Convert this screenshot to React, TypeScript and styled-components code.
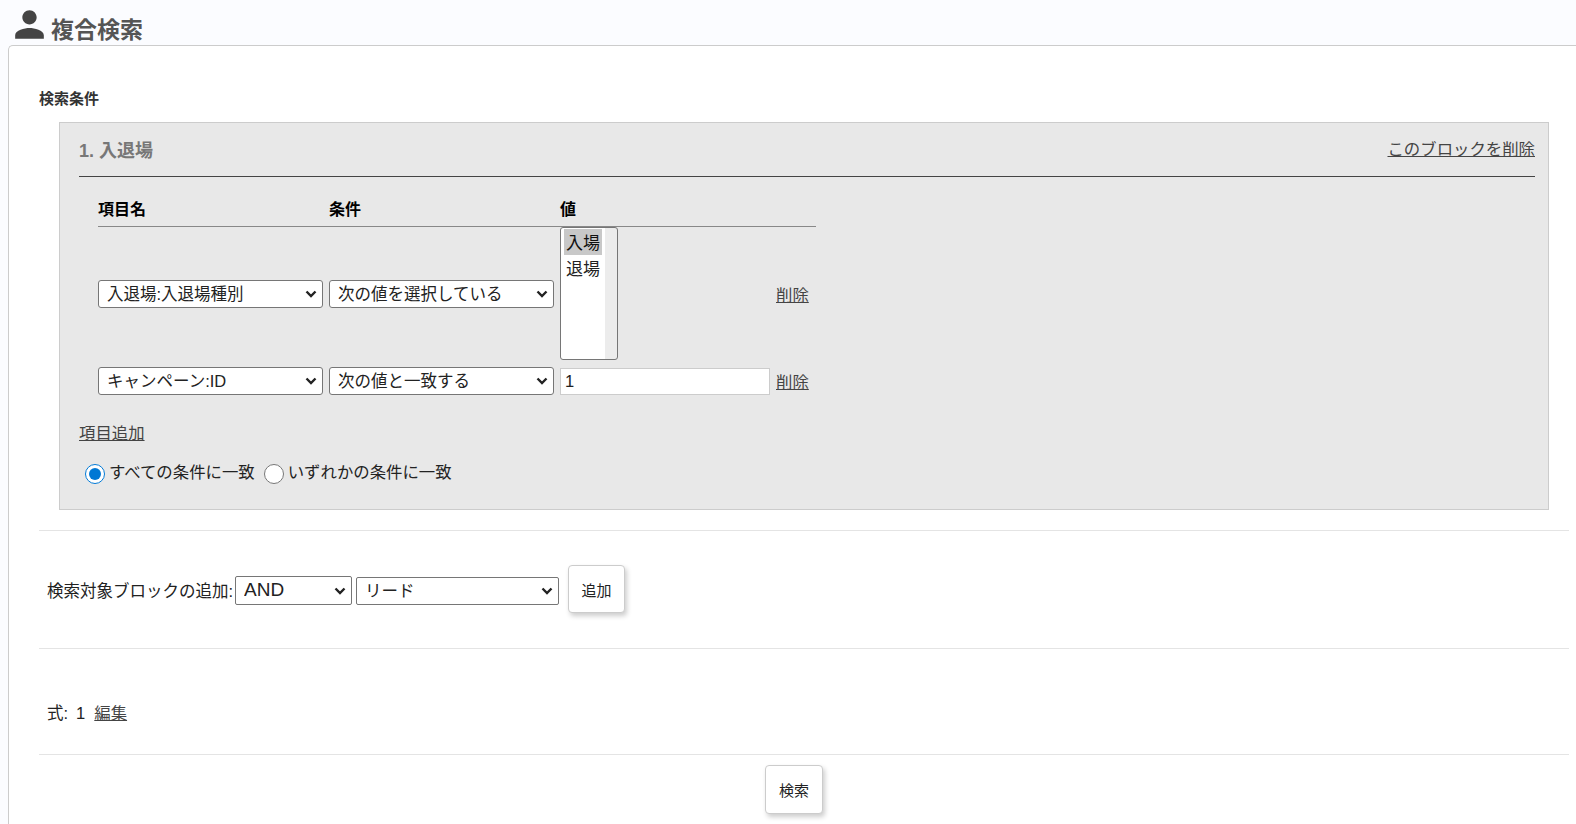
import React from "react";
import styled, { createGlobalStyle } from "styled-components";

const GlobalStyle = createGlobalStyle`
  html, body {
    margin: 0;
    padding: 0;
    background: #fbfcff;
    overflow: hidden;
  }
  body {
    font-family: "Liberation Sans", "Noto Sans CJK JP", sans-serif;
    font-size: 16.4px;
    color: #333;
  }
  select, input, button {
    font-family: "Liberation Sans", "Noto Sans CJK JP", sans-serif;
  }
`;

const chevron =
  "data:image/svg+xml,%3Csvg xmlns='http://www.w3.org/2000/svg' width='12' height='8' viewBox='0 0 12 8'%3E%3Cpath d='M1.5 1.5l4.5 4.5 4.5-4.5' fill='none' stroke='%23222' stroke-width='2.4'/%3E%3C/svg%3E";

export default function App() {
  return (
    <Page>
      <GlobalStyle />
      <Header>
        <PersonIcon viewBox="0 0 24 24">
          <path d="M12 12c2.21 0 4-1.79 4-4s-1.79-4-4-4-4 1.79-4 4 1.79 4 4 4zm0 2c-2.67 0-8 1.34-8 4v2h16v-2c0-2.66-5.33-4-8-4z" />
        </PersonIcon>
        <PageTitle>複合検索</PageTitle>
      </Header>

      <Card>
        <SectionLabel>検索条件</SectionLabel>

        <Block>
          <BlockHead>
            <BlockTitle>1. 入退場</BlockTitle>
            <TextLink href="#">このブロックを削除</TextLink>
          </BlockHead>

          <ConditionTable>
            <thead>
              <tr>
                <HeadCell>項目名</HeadCell>
                <HeadCell>条件</HeadCell>
                <HeadCell>値</HeadCell>
                <HeadCell />
              </tr>
            </thead>
            <tbody>
              <tr>
                <Cell>
                  <FieldSelect defaultValue="a">
                    <option value="a">入退場:入退場種別</option>
                  </FieldSelect>
                </Cell>
                <Cell>
                  <FieldSelect defaultValue="a">
                    <option value="a">次の値を選択している</option>
                  </FieldSelect>
                </Cell>
                <Cell>
                  <ValueList multiple size={5} defaultValue={["in"]}>
                    <option value="in">入場</option>
                    <option value="out">退場</option>
                  </ValueList>
                </Cell>
                <Cell>
                  <TextLink href="#">削除</TextLink>
                </Cell>
              </tr>
              <tr>
                <SpacedCell>
                  <FieldSelect defaultValue="a">
                    <option value="a">キャンペーン:ID</option>
                  </FieldSelect>
                </SpacedCell>
                <SpacedCell>
                  <FieldSelect defaultValue="a">
                    <option value="a">次の値と一致する</option>
                  </FieldSelect>
                </SpacedCell>
                <SpacedCell>
                  <ValueInput defaultValue="1" />
                </SpacedCell>
                <SpacedCell>
                  <TextLink href="#">削除</TextLink>
                </SpacedCell>
              </tr>
            </tbody>
          </ConditionTable>

          <AddItemRow>
            <TextLink href="#">項目追加</TextLink>
          </AddItemRow>

          <RadioRow>
            <RadioLabel>
              <Radio type="radio" name="match" defaultChecked />
              すべての条件に一致
            </RadioLabel>
            <RadioLabel>
              <Radio type="radio" name="match" />
              いずれかの条件に一致
            </RadioLabel>
          </RadioRow>
        </Block>

        <Divider />

        <AddBlockRow>
          <span>検索対象ブロックの追加:</span>
          <OperatorSelect defaultValue="and">
            <option value="and">AND</option>
          </OperatorSelect>
          <TargetSelect defaultValue="lead">
            <option value="lead">リード</option>
          </TargetSelect>
          <AddButton>追加</AddButton>
        </AddBlockRow>

        <Divider />

        <FormulaRow>
          <span>式:</span>
          <span>1</span>
          <TextLink href="#">編集</TextLink>
        </FormulaRow>

        <Divider />

        <SubmitRow>
          <ActionButton>検索</ActionButton>
        </SubmitRow>
      </Card>
    </Page>
  );
}

const Page = styled.div`
  width: 1576px;
  height: 824px;
  overflow: hidden;
`;
const Header = styled.header`
  height: 45px;
  display: flex;
  align-items: flex-start;
  padding-left: 8px;
  box-sizing: border-box;
`;
const PersonIcon = styled.svg`
  width: 43px;
  height: 43px;
  margin-top: 3px;
  fill: #444;
  flex: none;
`;
const PageTitle = styled.h1`
  margin: 13px 0 0;
  font-size: 23px;
  line-height: 34px;
  height: 32px;
  font-weight: 700;
  color: #555;
`;
const Card = styled.main`
  margin-left: 8px;
  height: 779px;
  box-sizing: border-box;
  background: #fff;
  border: 1px solid #ccc;
  border-right: none;
  border-bottom: none;
  border-top-left-radius: 5px;
  padding: 35px 7px 0 30px;
`;
const SectionLabel = styled.div`
  font-size: 15px;
  line-height: 36px;
  font-weight: 700;
  color: #333;
`;
const Block = styled.section`
  margin: 5px 20px 20px 20px;
  height: 388px;
  box-sizing: border-box;
  background: #e8e8e8;
  border: 1px solid #ccc;
  padding: 0 13px 0 19px;
`;
const BlockHead = styled.div`
  height: 54px;
  padding-bottom: 2px;
  box-sizing: border-box;
  display: flex;
  justify-content: space-between;
  align-items: center;
  border-bottom: 1px solid #444;
  a { margin-bottom: 2px; }
`;
const BlockTitle = styled.div`
  font-size: 18px;
  font-weight: 700;
  color: #777;
`;
const TextLink = styled.a`
  font-size: 16.4px;
  color: #444;
  text-decoration: underline;
`;
const ConditionTable = styled.table`
  margin: 15px 0 0 19px;
  width: 718px;
  border-collapse: collapse;
  table-layout: fixed;
  th:nth-child(1), th:nth-child(2) { width: 231px; }
  th:nth-child(3) { width: 216px; }
`;
const HeadCell = styled.th`
  height: 34px;
  padding: 0 0 2px;
  box-sizing: border-box;
  text-align: left;
  font-size: 16px;
  font-weight: 700;
  color: #000;
  border-bottom: 1px solid #888;
`;
const Cell = styled.td`
  padding: 0;
  vertical-align: middle;
`;
const SpacedCell = styled(Cell)`
  padding-top: 6px;
`;
const FieldSelect = styled.select`
  appearance: none;
  display: block;
  width: 225px;
  height: 28px;
  box-sizing: border-box;
  padding: 0 22px 0 8px;
  font-size: 16.5px;
  color: #222;
  background: #fff url("${chevron}") no-repeat right 5px center;
  border: 1px solid #767676;
  border-radius: 3px;
`;
const ValueList = styled.select`
  display: block;
  width: 58px;
  height: 133px;
  box-sizing: border-box;
  margin-bottom: 1px;
  padding: 1px 0 0 3px;
  font-size: 17px;
  color: #222;
  background: linear-gradient(to right, #fff 44px, #ececec 44px);
  border: 1px solid #767676;
  border-radius: 3px;
  overflow: hidden;
  option {
    width: 38px;
    height: 26px;
    line-height: 26px;
    padding: 0 2px;
    box-sizing: border-box;
    background: transparent;
  }
  option:checked {
    background: #c8c8c8;
  }
`;
const ValueInput = styled.input`
  display: block;
  width: 210px;
  height: 27px;
  margin-top: 1px;
  box-sizing: border-box;
  padding: 1px 4px;
  font-size: 16.5px;
  color: #222;
  background: #fff;
  border: 1px solid #ccc;
`;
const AddItemRow = styled.div`
  margin-top: 26px;
  line-height: 24px;
`;
const RadioRow = styled.div`
  display: flex;
  gap: 9px;
  margin: 15px 0 0 6px;
`;
const RadioLabel = styled.label`
  display: flex;
  align-items: flex-start;
  font-size: 16.4px;
  line-height: 24px;
  color: #222;
`;
const Radio = styled.input`
  width: 20px;
  height: 20px;
  margin: 4px 4px 0 0;
  flex: none;
  accent-color: #0078d4;
`;
const Divider = styled.hr`
  margin: 0;
  border: none;
  border-top: 1px solid #e4e4e4;
`;
const AddBlockRow = styled.div`
  height: 117px;
  padding: 34px 0 0 8px;
  box-sizing: border-box;
  display: flex;
  align-items: flex-start;
  font-size: 16.5px;
  color: #222;
  span { margin-top: 13px; }
`;
const OperatorSelect = styled(FieldSelect)`
  width: 117px;
  height: 29px;
  margin: 11px 0 0 2px;
  padding-bottom: 2px;
  font-size: 19px;
  border-radius: 2px;
`;
const TargetSelect = styled(FieldSelect)`
  width: 203px;
  margin: 12px 9px 0 4px;
  border-radius: 2px;
`;
const ActionButton = styled.button`
  width: 58px;
  height: 49px;
  padding: 0;
  font-size: 15px;
  color: #222;
  background: #fff;
  border: 1px solid #ccc;
  border-radius: 4px;
  box-shadow: 2px 3px 5px rgba(0, 0, 0, 0.2);
`;
const AddButton = styled(ActionButton)`
  width: 57px;
  height: 48px;
`;
const FormulaRow = styled.div`
  height: 105px;
  padding: 52px 0 0 8px;
  box-sizing: border-box;
  display: flex;
  gap: 8px;
  font-size: 16.5px;
  line-height: 24px;
  color: #222;
  a { margin-left: 1px; }
`;
const SubmitRow = styled.div`
  display: flex;
  justify-content: center;
  padding: 10px 20px 0 0;
`;
